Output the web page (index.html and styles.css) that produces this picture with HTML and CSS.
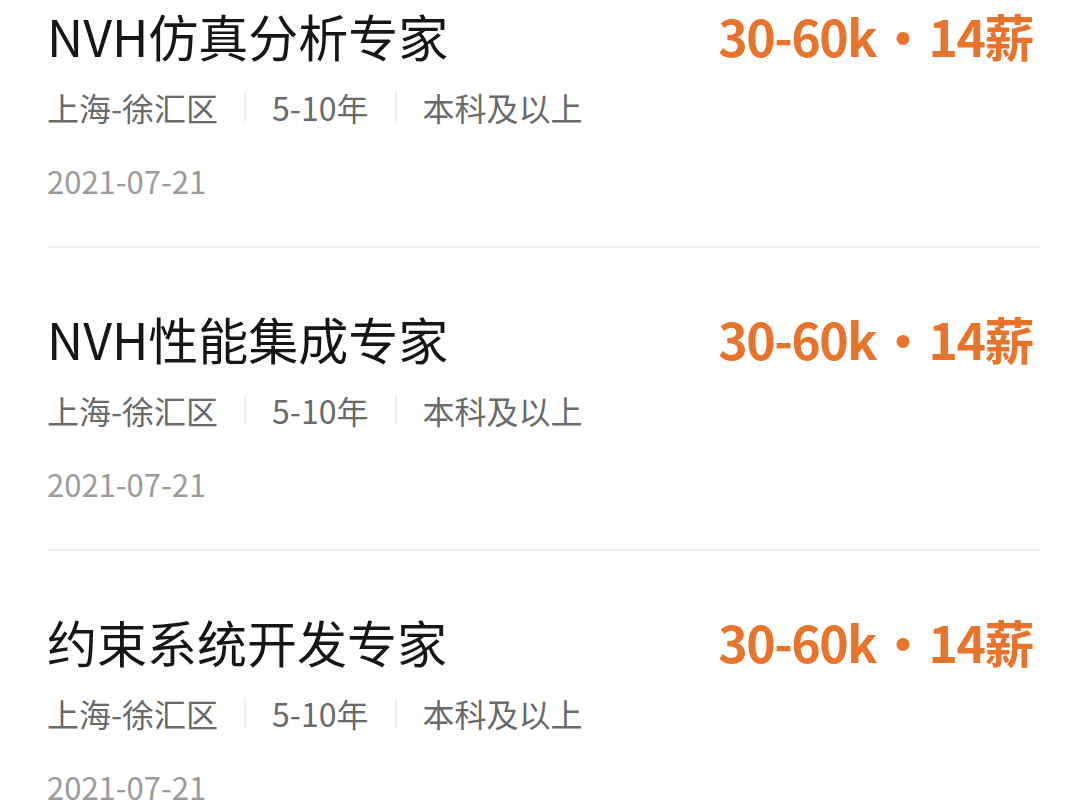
FILE: index.html
```html
<!DOCTYPE html>
<html lang="zh-CN">
<head>
    <meta charset="UTF-8">
    <meta name="viewport" content="width=device-width, initial-scale=1.0">
    <title>职位列表</title>
    <link rel="stylesheet" href="styles.css">
</head>
<body>
    <ul class="job-list">
        <li class="job">
            <div class="job-head">
                <h2 class="job-title">NVH仿真分析专家</h2>
                <span class="job-salary">30-60k<span class="dot">•</span>14薪</span>
            </div>
            <div class="job-meta">
                <span>上海-徐汇区</span>
                <span class="sep"></span>
                <span>5-10年</span>
                <span class="sep"></span>
                <span>本科及以上</span>
            </div>
            <div class="job-date">2021-07-21</div>
        </li>
        <li class="job">
            <div class="job-head">
                <h2 class="job-title">NVH性能集成专家</h2>
                <span class="job-salary">30-60k<span class="dot">•</span>14薪</span>
            </div>
            <div class="job-meta">
                <span>上海-徐汇区</span>
                <span class="sep"></span>
                <span>5-10年</span>
                <span class="sep"></span>
                <span>本科及以上</span>
            </div>
            <div class="job-date">2021-07-21</div>
        </li>
        <li class="job">
            <div class="job-head">
                <h2 class="job-title">约束系统开发专家</h2>
                <span class="job-salary">30-60k<span class="dot">•</span>14薪</span>
            </div>
            <div class="job-meta">
                <span>上海-徐汇区</span>
                <span class="sep"></span>
                <span>5-10年</span>
                <span class="sep"></span>
                <span>本科及以上</span>
            </div>
            <div class="job-date">2021-07-21</div>
        </li>
    </ul>
</body>
</html>
```

FILE: styles.css
```css
body {
    margin: 0;
    background-color: #ffffff;
    font-family: 'Noto Sans CJK SC', 'Noto Sans', sans-serif;
    overflow: hidden;
}
.job-list {
    list-style: none;
    margin: 0;
    padding: 0 40px 0 47px;
}
.job {
    padding: 60px 0 43px;
    border-bottom: 2px solid #f1f1f1;
}
.job:first-child {
    padding-top: 5px;
}
.job-head {
    display: flex;
    justify-content: space-between;
    align-items: center;
    padding-right: 7px;
}
.job-title {
    margin: 0;
    font-size: 50px;
    font-weight: 400;
    line-height: 60px;
    color: #161616;
}
.job-salary {
    font-size: 50px;
    font-weight: 700;
    line-height: 60px;
    letter-spacing: -1.5px;
    color: #e8732a;
}
.dot {
    margin: 0 2px;
}
.job-meta {
    display: flex;
    align-items: center;
    gap: 26px;
    margin-top: 20px;
    font-size: 32px;
    line-height: 44px;
    color: #6a6a6a;
}
.sep {
    width: 2px;
    height: 30px;
    background-color: #f0f0f0;
}
.job-date {
    margin-top: 30px;
    font-size: 31px;
    line-height: 44px;
    color: #9b9b9b;
}
```
